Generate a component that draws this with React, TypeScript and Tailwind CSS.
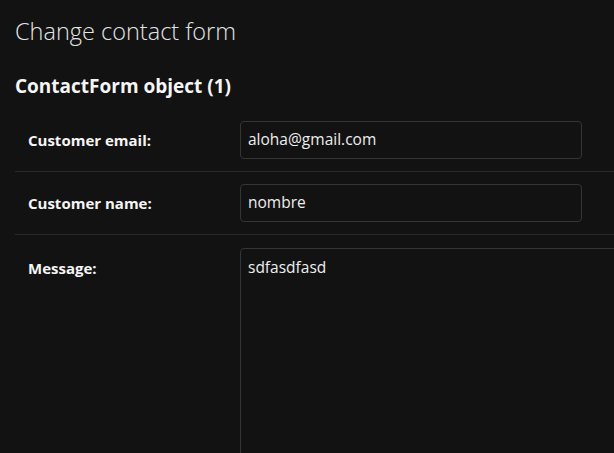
import React from "react";

export default function App() {
  const font = { fontFamily: '"Open Sans", "Noto Sans", sans-serif' };
  return (
    <div className="w-[614px] h-[453px] overflow-hidden bg-[#121212] text-[#eeeeee]" style={font}>
      <div className="pl-[15px] pt-[13px]">
        <h1 className="text-[23.5px] leading-[36px] font-light text-[#e4e4e4]">Change contact form</h1>
        <h2 className="mt-[24px] text-[19px] leading-[26px] font-bold text-[#f5f5f5]">ContactForm object (1)</h2>
        <div className="mt-[10px]">
          <div className="flex items-center pl-[13px] py-[12px] border-b border-[#2a2a2a]">
            <label className="w-[212px] shrink-0 text-[15px] font-bold text-[#f5f5f5]">Customer email:</label>
            <div className="w-[342px] h-[38px] shrink-0 rounded-[4px] border border-[#353535] px-[7px] flex items-center text-[15.5px] text-[#eeeeee]">
              aloha@gmail.com
            </div>
          </div>
          <div className="flex items-center pl-[13px] py-[12px] border-b border-[#2a2a2a]">
            <label className="w-[212px] shrink-0 text-[15px] font-bold text-[#f5f5f5]">Customer name:</label>
            <div className="w-[342px] h-[38px] shrink-0 rounded-[4px] border border-[#353535] px-[7px] flex items-center text-[15.5px] text-[#eeeeee]">
              nombre
            </div>
          </div>
          <div className="flex items-start pl-[13px] pt-[13px]">
            <label className="w-[212px] shrink-0 pt-[9px] text-[15px] font-bold text-[#f5f5f5]">Message:</label>
            <div className="w-[420px] h-[260px] shrink-0 rounded-[4px] border border-[#353535] px-[7px] pt-[7px] text-[15.5px] text-[#eeeeee]">
              sdfasdfasd
            </div>
          </div>
        </div>
      </div>
    </div>
  );
}
